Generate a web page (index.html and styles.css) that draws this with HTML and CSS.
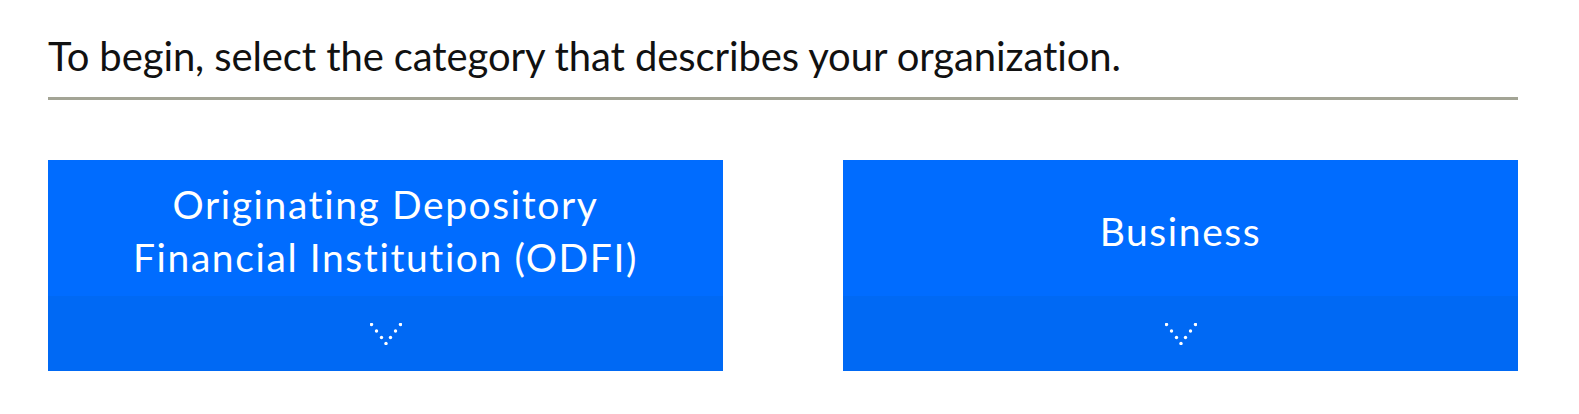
FILE: index.html
```html
<!DOCTYPE html>
<html lang="en">
<head>
    <meta charset="UTF-8">
    <meta name="viewport" content="width=device-width, initial-scale=1.0">
    <title>Select your organization</title>
    <link rel="stylesheet" href="styles.css">
</head>
<body>
    <div class="page">
        <h2 class="intro">To begin, select the category that describes your organization.</h2>

        <div class="categories">
            <button class="category" type="button">
                <span class="category-label">Originating Depository<br>Financial Institution (ODFI)</span>
                <span class="category-toggle">
                    <svg width="32" height="22" viewBox="0 0 32 22">
                        <circle cx="1.5" cy="1.5" r="1.7"/>
                        <circle cx="6.5" cy="8" r="1.7"/>
                        <circle cx="11.5" cy="14.5" r="1.7"/>
                        <circle cx="16" cy="20.5" r="1.7"/>
                        <circle cx="20.5" cy="14.5" r="1.7"/>
                        <circle cx="25.5" cy="8" r="1.7"/>
                        <circle cx="30.5" cy="1.5" r="1.7"/>
                    </svg>
                </span>
            </button>

            <button class="category" type="button">
                <span class="category-label">Business</span>
                <span class="category-toggle">
                    <svg width="32" height="22" viewBox="0 0 32 22">
                        <circle cx="1.5" cy="1.5" r="1.7"/>
                        <circle cx="6.5" cy="8" r="1.7"/>
                        <circle cx="11.5" cy="14.5" r="1.7"/>
                        <circle cx="16" cy="20.5" r="1.7"/>
                        <circle cx="20.5" cy="14.5" r="1.7"/>
                        <circle cx="25.5" cy="8" r="1.7"/>
                        <circle cx="30.5" cy="1.5" r="1.7"/>
                    </svg>
                </span>
            </button>
        </div>
    </div>
</body>
</html>
```

FILE: styles.css
```css
body {
    margin: 0;
    padding: 0;
    font-family: Lato, "Open Sans", Arial, sans-serif;
    font-variant-ligatures: none;
    background-color: #fff;
}

.page {
    width: 1470px;
    padding: 31px 0 0 48px;
}

.intro {
    margin: 0;
    padding-bottom: 15px;
    font-size: 40px;
    font-weight: 400;
    line-height: 51px;
    letter-spacing: -0.1px;
    color: #111;
    border-bottom: 3px solid #a3a495;
}

.categories {
    display: flex;
    justify-content: space-between;
    margin-top: 60px;
}

.category {
    display: flex;
    flex-direction: column;
    width: 675px;
    height: 211px;
    padding: 0;
    border: none;
    background-color: #006cff;
    color: #fff;
    font-family: inherit;
    cursor: pointer;
}

.category-label {
    display: flex;
    align-items: center;
    justify-content: center;
    height: 136px;
    padding-top: 6px;
    box-sizing: border-box;
    font-size: 39px;
    line-height: 53px;
    letter-spacing: 1.6px;
    text-align: center;
}

.category-toggle {
    display: flex;
    align-items: center;
    justify-content: center;
    width: 100%;
    height: 75px;
    background-color: #0069f4;
}

.category-toggle svg {
    fill: #fff;
}
```
